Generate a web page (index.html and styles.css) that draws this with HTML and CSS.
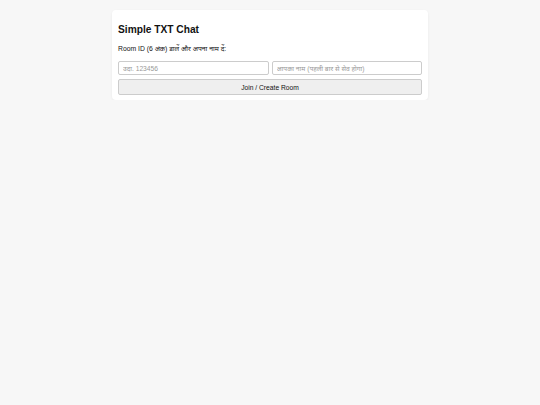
FILE: index.html
```html
<!DOCTYPE html>
<html lang="hi">
<head>
<meta charset="utf-8">
<title>Simple TXT Chat</title>
<link rel="stylesheet" href="styles.css">
</head>
<body>
<div class="card">
  <h2 class="title">Simple TXT Chat</h2>
  <p class="label">Room ID (6 अंक) डालें और अपना नाम दें:</p>
  <div class="row">
    <input class="field" type="text" placeholder="उदा. 123456">
    <input class="field" type="text" placeholder="आपका नाम (पहली बार से सेव होगा)">
  </div>
  <button class="join" type="button">Join / Create Room</button>
</div>
</body>
</html>
```

FILE: styles.css
```css
html, body {
  margin: 0;
  padding: 0;
}
body {
  background: #f7f7f7;
  font-family: "Liberation Sans", Arial, "Noto Sans", sans-serif;
  color: #111;
  padding-top: 10px;
}
.card {
  width: 304px;
  margin: 0 auto;
  background: #fff;
  padding: 6px 6px 5px;
  border-radius: 4px;
  box-shadow: 0 1px 3px rgba(0, 0, 0, 0.06);
}
.title {
  font-size: 10.2px;
  line-height: 14px;
  font-weight: bold;
  margin: 7px 0 7px;
}
.label {
  font-size: 6.8px;
  line-height: 9px;
  margin: 0 0 8px;
}
.row {
  display: flex;
  gap: 3px;
}
.field {
  flex: 1;
  min-width: 0;
  height: 14px;
  box-sizing: border-box;
  border: 0.5px solid #ccc;
  border-radius: 2px;
  padding: 0 4px;
  font-family: "Liberation Sans", Arial, "Noto Sans", sans-serif;
  font-size: 6.7px;
  background: #fff;
  outline: none;
}
.field::placeholder {
  color: #999;
}
.join {
  display: block;
  width: 100%;
  height: 16px;
  margin-top: 4px;
  box-sizing: border-box;
  border: 0.5px solid #ccc;
  border-radius: 2px;
  background: #efefef;
  font-family: "Liberation Sans", Arial, "Noto Sans", sans-serif;
  font-size: 6.7px;
  color: #111;
  padding: 0;
}
```
